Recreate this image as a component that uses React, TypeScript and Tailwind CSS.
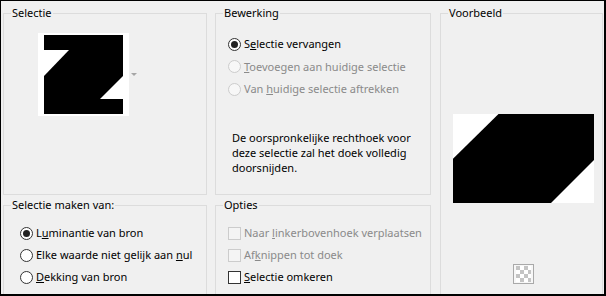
import type { ReactNode } from "react";

function Group({ title, className, children }: { title: string; className: string; children?: ReactNode }) {
    return (
        <div className={`relative border border-[#dcdcdc] ${className}`}>
            <span className="absolute left-[7px] -top-[9px] px-px bg-[#f0f0f0] leading-4 text-black">{title}</span>
            {children}
        </div>
    );
}

function Radio({ checked = false, disabled = false }: { checked?: boolean; disabled?: boolean }) {
    return (
        <span
            className={`w-[13px] h-[13px] shrink-0 rounded-full border flex items-center justify-center ${disabled ? "border-[#cccccc] bg-[#f7f7f7]" : "border-[#333333] bg-white"
                }`}
        >
            {checked && <span className="w-[7px] h-[7px] rounded-full bg-[#222222]" />}
        </span>
    );
}

function Check({ disabled = false }: { disabled?: boolean }) {
    return (
        <span
            className={`w-[13px] h-[13px] shrink-0 border ${disabled ? "border-[#cccccc] bg-[#f4f4f4]" : "border-[#333333] bg-white"}`}
        />
    );
}

function Row({ control, disabled = false, children }: { control: ReactNode; disabled?: boolean; children: ReactNode }) {
    return (
        <div className="flex items-center gap-[3px] h-[22.5px]">
            {control}
            <span className={`whitespace-nowrap leading-4 ${disabled ? "text-[#8a8a8a]" : "text-black"}`}>{children}</span>
        </div>
    );
}

function Row22({ control, disabled = false, children }: { control: ReactNode; disabled?: boolean; children: ReactNode }) {
    return (
        <div className="flex items-center gap-[3px] h-[22px]">
            {control}
            <span className={`whitespace-nowrap leading-4 ${disabled ? "text-[#8a8a8a]" : "text-black"}`}>{children}</span>
        </div>
    );
}

export default function App() {
    return (
        <div className="w-[606px] h-[296px] overflow-hidden bg-[#f0f0f0] border-t border-l border-r-2 border-b-2 border-black flex pl-[2px] pt-[12px] font-['Noto_Sans',sans-serif] text-[11px]">
            {/* left column */}
            <div className="w-[204px] shrink-0 flex flex-col gap-[10px]">
                <Group title="Selectie" className="h-[182px] shrink-0">
                    <div className="flex items-center gap-[2px] ml-[34px] mt-[19px]">
                        <svg width="91" height="83" viewBox="0 0 91 83">
                            <rect width="91" height="83" fill="#ffffff" />
                            <rect x="6" y="2" width="79" height="79" fill="#000000" />
                            <polygon points="6,17 31,17 6,43" fill="#ffffff" />
                            <polygon points="85,43 85,66 62,66" fill="#ffffff" />
                        </svg>
                        <svg width="6" height="3" viewBox="0 0 6 3">
                            <polygon points="0,0 6,0 3,3" fill="#a6a6a6" />
                        </svg>
                    </div>
                </Group>
                <Group title="Selectie maken van:" className="h-[90px] shrink-0">
                    <div className="flex flex-col pl-[16px] pt-[16px]">
                        <Row22 control={<Radio checked />}>
                            L<u>u</u>minantie van bron
                        </Row22>
                        <Row22 control={<Radio />}>
                            Elke waarde niet gelijk aan <u>n</u>ul
                        </Row22>
                        <Row22 control={<Radio />}>
                            <u>D</u>ekking van bron
                        </Row22>
                    </div>
                </Group>
            </div>

            {/* middle column */}
            <div className="w-[216px] shrink-0 ml-[8px] flex flex-col gap-[10px]">
                <Group title="Bewerking" className="h-[182px] shrink-0">
                    <div className="flex flex-col pl-[12px] pt-[19px]">
                        <Row control={<Radio checked />}>
                            S<u>e</u>lectie vervangen
                        </Row>
                        <Row control={<Radio disabled />} disabled>
                            <u>T</u>oevoegen aan huidige selectie
                        </Row>
                        <Row control={<Radio disabled />} disabled>
                            Van <u>h</u>uidige selectie aftrekken
                        </Row>
                    </div>
                    <p className="pl-[16px] pr-[8px] mt-[29px] leading-[15px] text-black">
                        De oorspronkelijke rechthoek voor
                        <br />
                        deze selectie zal het doek volledig
                        <br />
                        doorsnijden.
                    </p>
                </Group>
                <Group title="Opties" className="h-[90px] shrink-0">
                    <div className="flex flex-col pl-[12px] pt-[16px]">
                        <Row22 control={<Check disabled />} disabled>
                            Naar <u>l</u>inkerbovenhoek verplaatsen
                        </Row22>
                        <Row22 control={<Check disabled />} disabled>
                            Af<u>k</u>nippen tot doek
                        </Row22>
                        <Row22 control={<Check />}>
                            <u>S</u>electie omkeren
                        </Row22>
                    </div>
                </Group>
            </div>

            {/* right column */}
            <div className="w-[163px] shrink-0 ml-[9px]">
                <Group title="Voorbeeld" className="h-[282px] flex flex-col">
                    <svg className="ml-[12px] mt-[100px]" width="141" height="89" viewBox="0 0 141 89">
                        <rect width="141" height="89" fill="#000000" />
                        <polygon points="0,0 45.5,0 0,44.7" fill="#ffffff" />
                        <polygon points="141,46 141,89 98,89" fill="#ffffff" />
                    </svg>
                    <svg className="ml-[72px] mt-[61px]" width="21" height="20" viewBox="0 0 21 20">
                        <rect x="0.5" y="0.5" width="20" height="19" fill="#f7f7f7" stroke="#a9a9a9" />
                        <rect x="3" y="2" width="15" height="16" fill="#ffffff" />
                        <rect x="3" y="2" width="4" height="4" fill="#c4c4c4" />
                        <rect x="11" y="2" width="4" height="4" fill="#c4c4c4" />
                        <rect x="7" y="6" width="4" height="4" fill="#c4c4c4" />
                        <rect x="15" y="6" width="3" height="4" fill="#c4c4c4" />
                        <rect x="3" y="10" width="4" height="4" fill="#c4c4c4" />
                        <rect x="11" y="10" width="4" height="4" fill="#c4c4c4" />
                        <rect x="7" y="14" width="4" height="4" fill="#c4c4c4" />
                        <rect x="15" y="14" width="3" height="4" fill="#c4c4c4" />
                    </svg>
                </Group>
            </div>
        </div>
    );
}
